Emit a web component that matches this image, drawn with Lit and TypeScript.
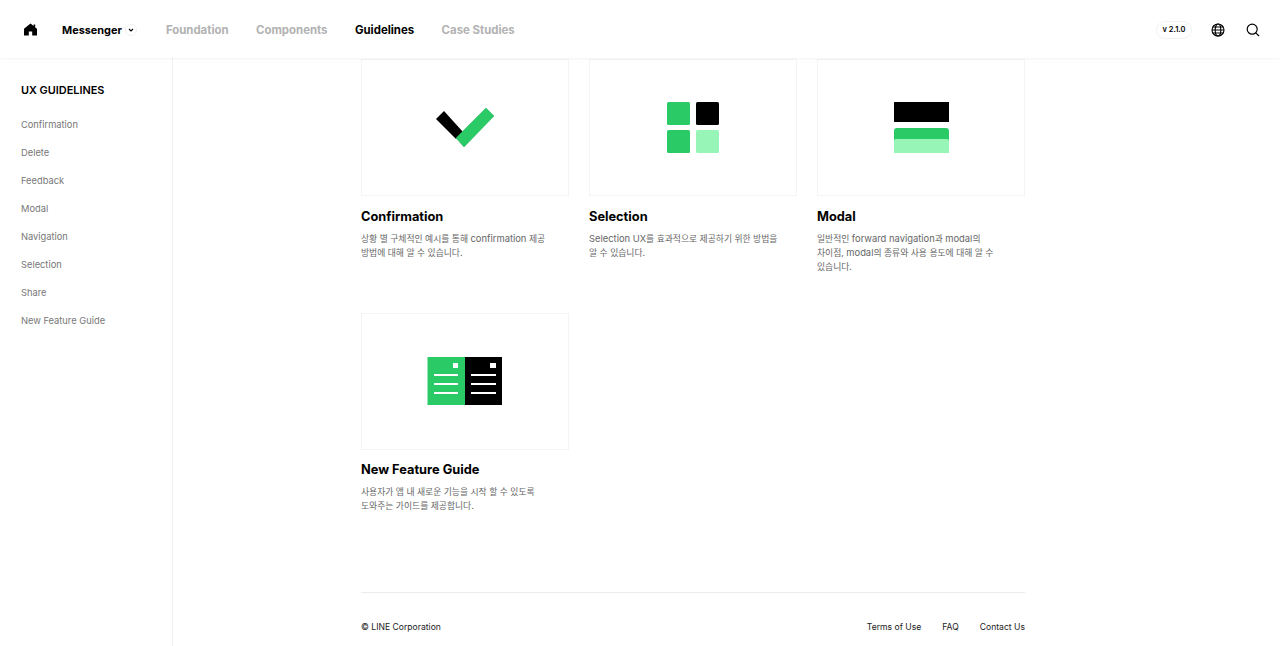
import { LitElement, css, html, svg } from "lit";
import { customElement } from "lit/decorators.js";

const GREEN = "#2acb67";
const MINT = "#98f5b8";

const cards = [
  {
    title: "Confirmation",
    desc: html`상황 별 구체적인 예시를 통해 <span class="latin">confirmation</span> 제공<br />방법에 대해 알 수 있습니다.`,
    art: svg`<polygon points="22,9 14,17 34,37 41,30" fill="#000" />
      <polygon points="64,6 72,14 42,45 34,36" fill="${GREEN}" stroke="#1fae55" stroke-width="0.5" />`,
  },
  {
    title: "Selection",
    desc: html`<span class="latin">Selection UX</span>를 효과적으로 제공하기 위한 방법을<br />알 수 있습니다.`,
    art: svg`<rect x="17" y="0" width="23" height="23" rx="1.5" fill="${GREEN}" />
      <rect x="46" y="0" width="23" height="23" rx="1.5" fill="#000" />
      <rect x="17" y="28" width="23" height="23" rx="1.5" fill="${GREEN}" />
      <rect x="46" y="28" width="23" height="23" rx="1.5" fill="${MINT}" />`,
  },
  {
    title: "Modal",
    desc: html`일반적인 <span class="latin">forward navigation</span>과 <span class="latin">modal</span>의<br />차이점, <span class="latin">modal</span>의 종류와 사용 용도에 대해 알 수<br />있습니다.`,
    art: svg`<rect x="16" y="0" width="55" height="20" fill="#000" />
      <path d="M16 40V29a3 3 0 0 1 3-3h49a3 3 0 0 1 3 3v11z" fill="${GREEN}" />
      <path d="M16 51V39a2 2 0 0 1 2-2h51a2 2 0 0 1 2 2v12z" fill="${MINT}" />`,
  },
  {
    title: "New Feature Guide",
    desc: html`사용자가 앱 내 새로운 기능을 시작 할 수 있도록<br />도와주는 가이드를 제공합니다.`,
    art: svg`<rect x="5.5" y="1" width="37.5" height="48" fill="${GREEN}" />
      <rect x="43" y="1" width="37" height="48" fill="#000" />
      <rect x="31" y="7" width="5" height="5" fill="#fff" />
      <rect x="68" y="7" width="6" height="5" fill="#fff" />
      ${[18, 27, 36].map(
        (y) => svg`<rect x="12" y="${y}" width="24" height="2" fill="#fff" />
          <rect x="49" y="${y}" width="25" height="2" fill="#fff" />`
      )}`,
  },
];

const sideItems = [
  "Confirmation",
  "Delete",
  "Feedback",
  "Modal",
  "Navigation",
  "Selection",
  "Share",
  "New Feature Guide",
];

@customElement("app-root")
export class AppRoot extends LitElement {
  static styles = css`
    :host {
      display: flex;
      flex-direction: column;
      height: 646px;
      overflow: hidden;
      background: #fff;
      color: #000;
      font-family: Inter, "Noto Sans CJK KR", sans-serif;
    }
    header {
      flex: none;
      height: 58px;
      display: flex;
      align-items: center;
      padding: 1px 20px 0 24px;
      box-sizing: border-box;
      box-shadow: 0 1px 2px rgba(0, 0, 0, 0.05);
      position: relative;
      font-size: 11.4px;
      font-weight: 700;
    }
    .home {
      width: 13px;
      height: 13px;
      margin-right: 25px;
    }
    .service {
      display: flex;
      align-items: center;
      gap: 3px;
      margin-right: 29px;
      font-size: 10.9px;
    }
    .chev {
      width: 12px;
      height: 12px;
      border-radius: 50%;
      border: 1px solid #efefef;
      box-sizing: border-box;
      display: flex;
      align-items: center;
      justify-content: center;
    }
    nav {
      display: flex;
      gap: 27.5px;
      color: #b2b2b2;
    }
    nav .on {
      color: #000;
    }
    .right {
      margin-left: auto;
      display: flex;
      align-items: center;
    }
    .version {
      width: 36px;
      height: 18px;
      border: 1px solid #f3f3f3;
      border-radius: 9px;
      box-sizing: border-box;
      display: flex;
      align-items: center;
      justify-content: center;
      font-size: 7.5px;
      font-weight: 600;
      margin-right: 19px;
    }
    .globe {
      width: 14px;
      height: 14px;
      margin-right: 21px;
    }
    .search {
      width: 14px;
      height: 14px;
    }
    .body {
      flex: 1;
      display: flex;
      min-height: 0;
    }
    aside {
      flex: none;
      width: 151px;
      border-right: 1px solid #f0f0f0;
      padding: 25px 0 0 21px;
    }
    aside h2 {
      margin: 0 0 21px;
      font-size: 10.9px;
      line-height: 14px;
      font-weight: 600;
    }
    aside ul {
      list-style: none;
      margin: 0;
      padding: 0;
      display: flex;
      flex-direction: column;
      gap: 14px;
      font-size: 9.3px;
      line-height: 14px;
      color: #777;
    }
    main {
      padding: 1px 0 0 188px;
      width: 664px;
    }
    .grid {
      display: grid;
      grid-template-columns: repeat(3, 208px);
      column-gap: 20px;
      row-gap: 39px;
    }
    .thumb {
      height: 137px;
      border: 1px solid #f4f4f4;
      box-sizing: border-box;
      display: flex;
      align-items: center;
      justify-content: center;
    }
    .thumb svg {
      width: 86px;
      height: 51px;
      overflow: visible;
    }
    .card h3 {
      margin: 12px 0 7px;
      font-size: 12.8px;
      line-height: 16px;
      font-weight: 700;
    }
    .card:nth-child(-n + 3) h3 {
      margin-top: 13px;
    }
    .card p {
      margin: 0;
      font-size: 8.8px;
      line-height: 14px;
      color: #666;
    }
    .latin {
      font-size: 9.4px;
    }
    footer {
      margin-top: 79px;
      border-top: 1px solid #ececec;
      display: flex;
      justify-content: space-between;
      padding-top: 28px;
      font-size: 8.6px;
      line-height: 12px;
      color: #222;
    }
    .links {
      display: flex;
      gap: 21px;
    }
  `;

  private _renderCard(card: (typeof cards)[number]) {
    return html`
      <div class="card">
        <div class="thumb">
          <svg viewBox="0 0 86 51">${card.art}</svg>
        </div>
        <h3>${card.title}</h3>
        <p>${card.desc}</p>
      </div>
    `;
  }

  render() {
    return html`
      <header>
        <svg class="home" viewBox="0 0 13 13">
          <path d="M6.5 .6 9.6 3V1.4h1.6v3L13 5.8V12.6H8.2V8.6H4.8v4H0V5.8z" fill="#000" />
        </svg>
        <div class="service">
          <span>Messenger</span>
          <span class="chev">
            <svg width="6" height="4" viewBox="0 0 6 4">
              <path d="M1 1l2 2 2-2" fill="none" stroke="#000" stroke-width="1.1" />
            </svg>
          </span>
        </div>
        <nav>
          <span>Foundation</span>
          <span>Components</span>
          <span class="on">Guidelines</span>
          <span>Case Studies</span>
        </nav>
        <div class="right">
          <div class="version">v 2.1.0</div>
          <svg class="globe" viewBox="0 0 14 14" fill="none" stroke="#000" stroke-width="1.1">
            <circle cx="7" cy="7" r="6" />
            <ellipse cx="7" cy="7" rx="2.8" ry="6" />
            <path d="M1 7h12M1.8 4h10.4M1.8 10h10.4" />
          </svg>
          <svg class="search" viewBox="0 0 14 14" fill="none" stroke="#000" stroke-width="1.2">
            <circle cx="6.2" cy="6.2" r="5" />
            <path d="M9.8 9.8 13 13" />
          </svg>
        </div>
      </header>
      <div class="body">
        <aside>
          <h2>UX GUIDELINES</h2>
          <ul>
            ${sideItems.map((item) => html`<li>${item}</li>`)}
          </ul>
        </aside>
        <main>
          <div class="grid">${cards.map((card) => this._renderCard(card))}</div>
          <footer>
            <span>© LINE Corporation</span>
            <div class="links">
              <span>Terms of Use</span>
              <span>FAQ</span>
              <span>Contact Us</span>
            </div>
          </footer>
        </main>
      </div>
    `;
  }
}
